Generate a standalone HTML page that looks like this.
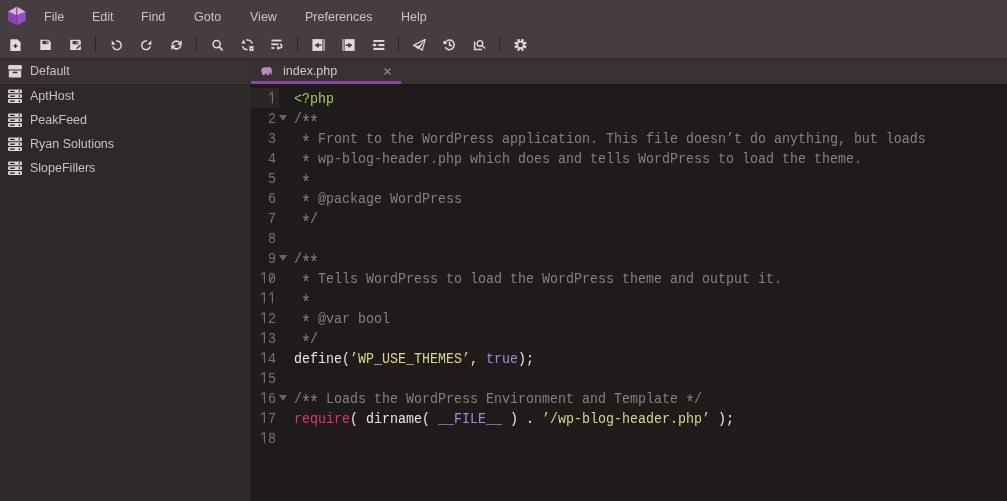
<!DOCTYPE html>
<html><head><meta charset="utf-8">
<style>
*{margin:0;padding:0;box-sizing:border-box}
html,body{width:1007px;height:501px;overflow:hidden;background:#1f1b1b;font-family:"Liberation Sans",sans-serif}
.abs{position:absolute}
div,svg{will-change:transform}
#top{left:0;top:0;width:1007px;height:58px;background:#453d3e}
.menu{position:absolute;top:10px;line-height:15px;font-size:12.5px;color:#cbc3c3;white-space:nowrap}
.tb{position:absolute;top:39px}
.sep{position:absolute;top:36px;width:1px;height:16px;background:#2c2626}
#side{left:0;top:58px;width:250px;height:443px;background:#2e2929}
#sel{left:0;top:58px;width:249px;height:26px;background:linear-gradient(#2f2a2a,#383232 3px,#383232 25px,#3c3535 25px)}
#sideborder{left:249px;top:58px;width:1px;height:443px;background:#343030}
.si{position:absolute;left:30px;font-size:12.5px;line-height:15px;color:#c9c1c1;white-space:nowrap}
.sico{position:absolute;left:8px}
#tabbar{left:250px;top:58px;width:757px;height:26px;background:linear-gradient(#312b2c,#373132 3px,#373132)}
#tabline{left:251px;top:81px;width:150px;height:3px;background:#8e44ad}
.code{position:absolute;left:294px;font-family:"Liberation Mono",monospace;font-size:13.333px;line-height:20px;color:#ebe7e3;white-space:pre;transform:translateY(1.8px) scaleY(1.1);transform-origin:0 13px}
.ln{position:absolute;left:250px;width:26px;text-align:right;font-family:"Liberation Mono",monospace;font-size:13.333px;line-height:20px;color:#7a7272;white-space:pre;transform:translateY(1.8px) scaleY(1.1);transform-origin:0 13px}
.fold{position:absolute;left:279px;width:0;height:0;border-left:4.5px solid transparent;border-right:4.5px solid transparent;border-top:6px solid #6a6262}
.c{color:#88807a}
.s{color:#ddd688}
.k{color:#e0386e}
.p{color:#9f8ee4}
.t{color:#a8cd52}
.one{display:inline-block;width:8px;height:20px;vertical-align:top}
.zero{position:relative}
.zero::after{content:'';position:absolute;left:3.4px;top:4px;width:1.1px;height:6.5px;background:#7a7272;transform:rotate(27deg)}
.ast{display:inline-block;transform:translateY(3.3px) scale(1.25,1.32);transform-origin:50% 7px}
#gut1{left:250px;top:88px;width:29px;height:20px;background:#2a2626}
</style></head><body>
<div id="top" class="abs"></div>
<svg class="abs" style="left:7px;top:6px" width="20" height="20" viewBox="7 6 20 20">
<polygon points="16.8,6.6 25.6,11.7 16.8,15.6 8,11.7" fill="#d7b0ec"/>
<polygon points="8,11.7 16.8,15.6 16.8,25.4 8,20.8" fill="#8a45bd"/>
<polygon points="25.6,11.7 16.8,15.6 16.8,25.4 25.6,20.8" fill="#9a4ec8"/>
<line x1="16.8" y1="7" x2="16.8" y2="15.5" stroke="#4a3650" stroke-width="0.9"/>
<line x1="16.8" y1="15.5" x2="16.8" y2="25" stroke="#6a3590" stroke-width="0.6"/>
</svg>
<div class="menu" style="left:44px">File</div>
<div class="menu" style="left:92px">Edit</div>
<div class="menu" style="left:141px">Find</div>
<div class="menu" style="left:194px">Goto</div>
<div class="menu" style="left:250px">View</div>
<div class="menu" style="left:305px">Preferences</div>
<div class="menu" style="left:401px">Help</div>
<svg class="tb" style="left:8.5px" width="13" height="13" viewBox="0 0 13 13"><path d="M1.3 0.2H8.4L11.6 3.4V11.9H1.3z" fill="#e2dada"/><rect x="4.5" y="6.3" width="4" height="1.4" fill="#3a3232"/><rect x="5.8" y="5" width="1.4" height="4" fill="#3a3232"/></svg>
<svg class="tb" style="left:38.5px" width="13" height="13" viewBox="0 0 13 13"><path d="M1.3 0.8H9.6L11.8 3V11.1H1.3z" fill="#e2dada"/><rect x="3.4" y="1.8" width="6" height="3.3" fill="#433b3c"/><rect x="7.4" y="2.3" width="1.1" height="2.3" fill="#e2dada"/></svg>
<svg class="tb" style="left:68.5px" width="13" height="13" viewBox="0 0 13 13"><path d="M1.2 0.8H9.4Q11.9 0.8 11.9 3.5V11H1.2z" fill="#e2dada"/><rect x="3.6" y="2" width="5.8" height="3.3" fill="#433b3c"/><rect x="7.6" y="2.5" width="1" height="2.3" fill="#e2dada"/><path d="M7.6 9.6L11.6 6" stroke="#433b3c" stroke-width="1.5"/></svg>
<svg class="tb" style="left:109.5px" width="13" height="13" viewBox="0 0 13 13"><path d="M2.75 7.41A4.3 4.3 0 1 0 6.01 2.1" fill="none" stroke="#e2dada" stroke-width="1.5"/><path d="M1.7 1.6V6.1L5.6 5.2z" fill="#e2dada"/></svg>
<svg class="tb" style="left:139.5px" width="13" height="13" viewBox="0 0 13 13"><path d="M10.25 7.41A4.3 4.3 0 1 1 6.99 2.1" fill="none" stroke="#e2dada" stroke-width="1.5"/><path d="M11.3 1.6V6.1L7.4 5.2z" fill="#e2dada"/></svg>
<svg class="tb" style="left:169.5px" width="13" height="13" viewBox="0 0 13 13"><path d="M2.1 5.6A4.5 4.5 0 0 1 9.6 3.4M10.9 6.4A4.5 4.5 0 0 1 3.4 8.6" fill="none" stroke="#e2dada" stroke-width="1.6"/><path d="M11.8 1.2V6H7z M1.2 11V6.2H6z" fill="#e2dada"/></svg>
<svg class="tb" style="left:210.5px" width="13" height="13" viewBox="0 0 13 13"><circle cx="5.6" cy="5.05" r="3.6" fill="none" stroke="#e2dada" stroke-width="1.5"/><path d="M8.2 7.8l3 3" stroke="#e2dada" stroke-width="1.7" stroke-linecap="round"/></svg>
<svg class="tb" style="left:240.5px" width="13" height="13" viewBox="0 0 13 13"><path d="M2.5 0.6L4.6 4.6H0.4z" fill="#e2dada"/><path d="M5.2 1.1A5 5 0 0 1 11.2 4.6" fill="none" stroke="#e2dada" stroke-width="1.5"/><path d="M1.6 7.2A5 5 0 0 0 6.6 10.6" fill="none" stroke="#e2dada" stroke-width="1.5"/><rect x="8.5" y="7.1" width="4" height="4.8" fill="#e2dada"/><rect x="10" y="9" width="1.1" height="1" fill="#433b3c"/></svg>
<svg class="tb" style="left:270.5px" width="13" height="13" viewBox="0 0 13 13"><rect x="0.4" y="0.6" width="10" height="1.8" fill="#e2dada"/><rect x="0.4" y="4.4" width="7.1" height="1.8" fill="#e2dada"/><rect x="0.4" y="8.1" width="3" height="1.8" fill="#e2dada"/><path d="M9.2 5.1A2 2 0 0 1 9.2 9H7" fill="none" stroke="#e2dada" stroke-width="1.6"/><path d="M5.4 9L7.8 6.8V11.2z" fill="#e2dada"/></svg>
<svg class="tb" style="left:311.5px" width="13" height="13" viewBox="0 0 13 13"><rect x="0.4" y="0.1" width="10" height="11.8" fill="#e2dada"/><rect x="11.5" y="0.1" width="1.1" height="11.8" fill="#e2dada"/><path d="M4.5 6.2H9.3" stroke="#433b3c" stroke-width="1.6"/><path d="M2.4 6.2L6.6 3.4V9z" fill="#433b3c"/></svg>
<svg class="tb" style="left:341.5px" width="13" height="13" viewBox="0 0 13 13"><rect x="2.6" y="0.1" width="10" height="11.8" fill="#e2dada"/><rect x="0.5" y="0.1" width="1.1" height="11.8" fill="#e2dada"/><path d="M3.7 6.2H8.5" stroke="#433b3c" stroke-width="1.6"/><path d="M10.6 6.2L6.4 3.4V9z" fill="#433b3c"/></svg>
<svg class="tb" style="left:371.5px" width="13" height="13" viewBox="0 0 13 13"><rect x="1.4" y="1" width="11" height="1.9" fill="#e2dada"/><rect x="6.5" y="5" width="5.9" height="2.1" fill="#e2dada"/><rect x="1.4" y="8.9" width="11" height="2.1" fill="#e2dada"/><path d="M0.4 5.3H2.2V4L5 6 2.2 8V6.7H0.4z" fill="#e2dada"/></svg>
<svg class="tb" style="left:412.5px" width="13" height="13" viewBox="0 0 13 13"><path d="M12.3 0.3L0.4 6.4 5.2 7.6 9.1 11.3z" fill="none" stroke="#e2dada" stroke-width="1.2" stroke-linejoin="round"/><path d="M12.3 0.3L5.2 7.6 5.5 10.5 7 8.6z" fill="#e2dada"/><path d="M0.4 6.4L5.2 7.6 5.5 10.5z" fill="#e2dada"/></svg>
<svg class="tb" style="left:442.5px" width="13" height="13" viewBox="0 0 13 13"><path d="M2.2 8.2A4.8 4.8 0 1 0 3.6 1.9" fill="none" stroke="#e2dada" stroke-width="1.5"/><rect x="0.5" y="2" width="3" height="3.1" fill="#e2dada"/><path d="M6.6 2.5V6.6H9.2" fill="none" stroke="#e2dada" stroke-width="1.5"/></svg>
<svg class="tb" style="left:472.5px" width="13" height="13" viewBox="0 0 13 13"><path d="M1.6 2.4V10.4H9" fill="none" stroke="#e2dada" stroke-width="1.5"/><circle cx="6.9" cy="4.4" r="2.8" fill="none" stroke="#e2dada" stroke-width="1.4"/><path d="M8.9 6.5l3.2 3.1" stroke="#e2dada" stroke-width="1.4"/></svg>
<svg class="tb" style="left:513.5px" width="13" height="13" viewBox="0 0 13 13"><path d="M6.87,1.92 L7.71,-0.28 L10.02,0.67 L9.05,2.82 L9.58,3.35 L11.73,2.38 L12.68,4.69 L10.48,5.53 L10.48,6.27 L12.68,7.11 L11.73,9.42 L9.58,8.45 L9.05,8.98 L10.02,11.13 L7.71,12.08 L6.87,9.88 L6.13,9.88 L5.29,12.08 L2.98,11.13 L3.95,8.98 L3.42,8.45 L1.27,9.42 L0.32,7.11 L2.52,6.27 L2.52,5.53 L0.32,4.69 L1.27,2.38 L3.42,3.35 L3.95,2.82 L2.98,0.67 L5.29,-0.28 L6.13,1.92z" fill="#e2dada"/><circle cx="6.5" cy="5.9" r="2.4" fill="#433b3c"/></svg>
<div class="sep" style="left:95px"></div>
<div class="sep" style="left:196px"></div>
<div class="sep" style="left:297px"></div>
<div class="sep" style="left:398px"></div>
<div class="sep" style="left:499px"></div>
<div id="side" class="abs"></div><div id="sel" class="abs"></div><div id="sideborder" class="abs"></div>
<svg class="sico" style="top:65px" width="14" height="14" viewBox="0 0 14 14"><rect x="0" y="0" width="14" height="4.5" rx="1.5" fill="#ddd5d5"/><rect x="0.8" y="5.5" width="12.4" height="7" fill="#ddd5d5"/><rect x="4.5" y="6.8" width="5" height="1.5" rx=".7" fill="#373131"/></svg>
<div class="si" style="top:64px">Default</div>
<svg class="sico" style="top:89px" width="14" height="14" viewBox="0 0 14 14"><rect x="0" y="0.5" width="14" height="3.8" rx="1.3" fill="#ddd5d5"/><rect x="2" y="1.8" width="4.8" height="1.3" fill="#2a2525"/><rect x="10.8" y="1.4" width="1.2" height="2" fill="#2a2525"/><rect x="0" y="5.3" width="14" height="3.8" rx="1.3" fill="#ddd5d5"/><rect x="2" y="6.6" width="4.8" height="1.3" fill="#2a2525"/><rect x="10.8" y="6.2" width="1.2" height="2" fill="#2a2525"/><rect x="0" y="10.1" width="14" height="3.8" rx="1.3" fill="#ddd5d5"/><rect x="2" y="11.4" width="4.8" height="1.3" fill="#2a2525"/><rect x="10.8" y="11.0" width="1.2" height="2" fill="#2a2525"/></svg>
<div class="si" style="top:89px">AptHost</div>
<svg class="sico" style="top:113px" width="14" height="14" viewBox="0 0 14 14"><rect x="0" y="0.5" width="14" height="3.8" rx="1.3" fill="#ddd5d5"/><rect x="2" y="1.8" width="4.8" height="1.3" fill="#2a2525"/><rect x="10.8" y="1.4" width="1.2" height="2" fill="#2a2525"/><rect x="0" y="5.3" width="14" height="3.8" rx="1.3" fill="#ddd5d5"/><rect x="2" y="6.6" width="4.8" height="1.3" fill="#2a2525"/><rect x="10.8" y="6.2" width="1.2" height="2" fill="#2a2525"/><rect x="0" y="10.1" width="14" height="3.8" rx="1.3" fill="#ddd5d5"/><rect x="2" y="11.4" width="4.8" height="1.3" fill="#2a2525"/><rect x="10.8" y="11.0" width="1.2" height="2" fill="#2a2525"/></svg>
<div class="si" style="top:113px">PeakFeed</div>
<svg class="sico" style="top:137px" width="14" height="14" viewBox="0 0 14 14"><rect x="0" y="0.5" width="14" height="3.8" rx="1.3" fill="#ddd5d5"/><rect x="2" y="1.8" width="4.8" height="1.3" fill="#2a2525"/><rect x="10.8" y="1.4" width="1.2" height="2" fill="#2a2525"/><rect x="0" y="5.3" width="14" height="3.8" rx="1.3" fill="#ddd5d5"/><rect x="2" y="6.6" width="4.8" height="1.3" fill="#2a2525"/><rect x="10.8" y="6.2" width="1.2" height="2" fill="#2a2525"/><rect x="0" y="10.1" width="14" height="3.8" rx="1.3" fill="#ddd5d5"/><rect x="2" y="11.4" width="4.8" height="1.3" fill="#2a2525"/><rect x="10.8" y="11.0" width="1.2" height="2" fill="#2a2525"/></svg>
<div class="si" style="top:137px">Ryan Solutions</div>
<svg class="sico" style="top:161px" width="14" height="14" viewBox="0 0 14 14"><rect x="0" y="0.5" width="14" height="3.8" rx="1.3" fill="#ddd5d5"/><rect x="2" y="1.8" width="4.8" height="1.3" fill="#2a2525"/><rect x="10.8" y="1.4" width="1.2" height="2" fill="#2a2525"/><rect x="0" y="5.3" width="14" height="3.8" rx="1.3" fill="#ddd5d5"/><rect x="2" y="6.6" width="4.8" height="1.3" fill="#2a2525"/><rect x="10.8" y="6.2" width="1.2" height="2" fill="#2a2525"/><rect x="0" y="10.1" width="14" height="3.8" rx="1.3" fill="#ddd5d5"/><rect x="2" y="11.4" width="4.8" height="1.3" fill="#2a2525"/><rect x="10.8" y="11.0" width="1.2" height="2" fill="#2a2525"/></svg>
<div class="si" style="top:161px">SlopeFillers</div>
<div id="tabbar" class="abs"></div><div id="tabline" class="abs"></div>
<svg class="abs" style="left:260.5px;top:67.3px" width="11" height="8" viewBox="0 0 11 8"><ellipse cx="4.3" cy="3.5" rx="4" ry="3.2" fill="#b88cc2"/><ellipse cx="7.8" cy="3" rx="2.9" ry="2.9" fill="#b88cc2"/><rect x="1.2" y="4" width="2.6" height="4" fill="#b88cc2"/><rect x="5.6" y="4" width="2.6" height="4" fill="#b88cc2"/><rect x="9.4" y="3" width="1.3" height="4.5" fill="#b88cc2"/></svg>
<div class="abs" style="left:283px;top:64px;font-size:12.5px;line-height:15px;color:#d2caca">index.php</div>
<svg class="abs" style="left:384px;top:68px" width="7" height="7" viewBox="0 0 7 7"><path d="M0.5 0.5l6 6M6.5 0.5l-6 6" stroke="#978d8d" stroke-width="1.1"/></svg>
<div id="gut1" class="abs"></div>
<div class="ln" style="top:88px"><svg class="one" width="8" height="20"><path d="M4.4 3.3V13.2M1.2 5.6L4.4 3.4" stroke="#7a7272" stroke-width="1.15" fill="none"/></svg></div>
<div class="code" style="top:88px"><span class="t">&lt;?php</span></div>
<div class="ln" style="top:108px">2</div>
<div class="code" style="top:108px"><span class="c">/<span class="ast">*</span><span class="ast">*</span></span></div>
<div class="ln" style="top:128px">3</div>
<div class="code" style="top:128px"><span class="c"> <span class="ast">*</span> Front to the WordPress application. This file doesn&#8217;t do anything, but loads</span></div>
<div class="ln" style="top:148px">4</div>
<div class="code" style="top:148px"><span class="c"> <span class="ast">*</span> wp-blog-header.php which does and tells WordPress to load the theme.</span></div>
<div class="ln" style="top:168px">5</div>
<div class="code" style="top:168px"><span class="c"> <span class="ast">*</span></span></div>
<div class="ln" style="top:188px">6</div>
<div class="code" style="top:188px"><span class="c"> <span class="ast">*</span> @package WordPress</span></div>
<div class="ln" style="top:208px">7</div>
<div class="code" style="top:208px"><span class="c"> <span class="ast">*</span>/</span></div>
<div class="ln" style="top:228px">8</div>
<div class="ln" style="top:248px">9</div>
<div class="code" style="top:248px"><span class="c">/<span class="ast">*</span><span class="ast">*</span></span></div>
<div class="ln" style="top:268px"><svg class="one" width="8" height="20"><path d="M4.4 3.3V13.2M1.2 5.6L4.4 3.4" stroke="#7a7272" stroke-width="1.15" fill="none"/></svg><span class="zero">0</span></div>
<div class="code" style="top:268px"><span class="c"> <span class="ast">*</span> Tells WordPress to load the WordPress theme and output it.</span></div>
<div class="ln" style="top:288px"><svg class="one" width="8" height="20"><path d="M4.4 3.3V13.2M1.2 5.6L4.4 3.4" stroke="#7a7272" stroke-width="1.15" fill="none"/></svg><svg class="one" width="8" height="20"><path d="M4.4 3.3V13.2M1.2 5.6L4.4 3.4" stroke="#7a7272" stroke-width="1.15" fill="none"/></svg></div>
<div class="code" style="top:288px"><span class="c"> <span class="ast">*</span></span></div>
<div class="ln" style="top:308px"><svg class="one" width="8" height="20"><path d="M4.4 3.3V13.2M1.2 5.6L4.4 3.4" stroke="#7a7272" stroke-width="1.15" fill="none"/></svg>2</div>
<div class="code" style="top:308px"><span class="c"> <span class="ast">*</span> @var bool</span></div>
<div class="ln" style="top:328px"><svg class="one" width="8" height="20"><path d="M4.4 3.3V13.2M1.2 5.6L4.4 3.4" stroke="#7a7272" stroke-width="1.15" fill="none"/></svg>3</div>
<div class="code" style="top:328px"><span class="c"> <span class="ast">*</span>/</span></div>
<div class="ln" style="top:348px"><svg class="one" width="8" height="20"><path d="M4.4 3.3V13.2M1.2 5.6L4.4 3.4" stroke="#7a7272" stroke-width="1.15" fill="none"/></svg>4</div>
<div class="code" style="top:348px">define(<span class="s">&#8217;WP_USE_THEMES&#8217;</span>, <span class="p">true</span>);</div>
<div class="ln" style="top:368px"><svg class="one" width="8" height="20"><path d="M4.4 3.3V13.2M1.2 5.6L4.4 3.4" stroke="#7a7272" stroke-width="1.15" fill="none"/></svg>5</div>
<div class="ln" style="top:388px"><svg class="one" width="8" height="20"><path d="M4.4 3.3V13.2M1.2 5.6L4.4 3.4" stroke="#7a7272" stroke-width="1.15" fill="none"/></svg>6</div>
<div class="code" style="top:388px"><span class="c">/<span class="ast">*</span><span class="ast">*</span> Loads the WordPress Environment and Template <span class="ast">*</span>/</span></div>
<div class="ln" style="top:408px"><svg class="one" width="8" height="20"><path d="M4.4 3.3V13.2M1.2 5.6L4.4 3.4" stroke="#7a7272" stroke-width="1.15" fill="none"/></svg>7</div>
<div class="code" style="top:408px"><span class="k">require</span>( dirname( <span class="p">__FILE__</span> ) . <span class="s">&#8217;/wp-blog-header.php&#8217;</span> );</div>
<div class="ln" style="top:428px"><svg class="one" width="8" height="20"><path d="M4.4 3.3V13.2M1.2 5.6L4.4 3.4" stroke="#7a7272" stroke-width="1.15" fill="none"/></svg>8</div>
<div class="fold" style="top:115px"></div>
<div class="fold" style="top:255px"></div>
<div class="fold" style="top:395px"></div>
</body></html>
